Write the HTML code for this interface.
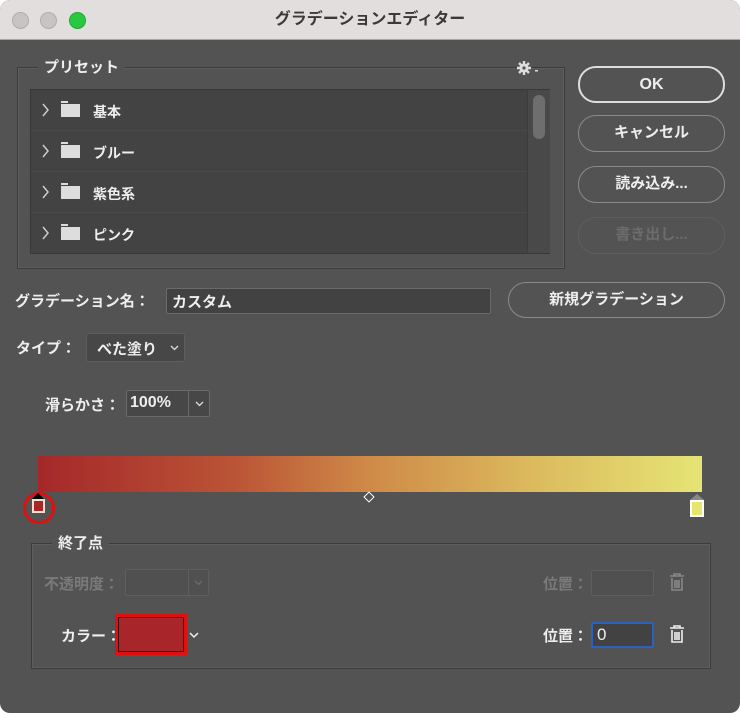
<!DOCTYPE html>
<html><head><meta charset="utf-8"><style>
*{box-sizing:border-box;margin:0;padding:0}
body{width:740px;height:713px;background:#fff;font-family:"Liberation Sans","Noto Sans CJK JP",sans-serif;font-size:15px;color:#eee;position:relative;overflow:hidden}
.win{position:absolute;left:0;top:0;width:740px;height:713px;background:#535353;border-radius:10px;overflow:hidden}
.tb{position:absolute;left:0;top:0;width:740px;height:40px;background:#e2dede;border-bottom:1px solid #a8a4a4;text-align:center;line-height:40px;color:#3a3a3a;font-weight:bold;font-size:16px}
.dot{position:absolute;top:12px;width:17px;height:17px;border-radius:50%;background:#c8c4c4;border:1px solid #b0acac}
.a{position:absolute}
.btn{position:absolute;border:1.5px solid #8a8a8a;border-radius:18px;text-align:center;font-weight:bold;font-size:15px;color:#eee}
.inp{position:absolute;background:#474747;border:1px solid #6a6a6a;border-radius:2px}
.lbl{position:absolute;font-weight:bold;font-size:15px;white-space:nowrap}
.row{position:absolute;left:0;width:497px;height:41px;border-bottom:1px solid #4a4a4a;font-weight:bold;font-size:14px}
.fold{position:absolute;left:30px;top:14px;width:19px;height:13px;background:#ddd}
.fold:before{content:"";position:absolute;left:0;top:-3px;width:7px;height:2px;background:#ddd}
.chev{position:absolute;left:11px;top:13px}
</style></head><body>
<div class="win">
<div class="tb">グラデーションエディター</div>
<div class="dot" style="left:12px"></div><div class="dot" style="left:40px"></div><div class="dot" style="left:69px;background:#2ac840;border-color:#22a834"></div>

<div class="a" style="left:17px;top:67px;width:548px;height:202px;border:1px solid #3c3c3c;box-shadow:inset 0 0 0 1px #5e5e5e"></div>
<div class="lbl" style="left:38px;top:56px;background:#535353;padding:0 6px">プリセット</div>
<svg class="a" style="left:516px;top:60px" width="26" height="16" viewBox="0 0 26 16"><circle cx="8" cy="8" r="4.5" fill="#ddd"/><g stroke="#ddd" stroke-width="2.4"><path d="M8 1v14M1 8h14M3 3l10 10M13 3L3 13"/></g><circle cx="8" cy="8" r="1.6" fill="#535353"/><rect x="19" y="10" width="3" height="1.5" fill="#ddd"/></svg>
<div class="a" style="left:30px;top:89px;width:520px;height:165px;background:#434343;border:1px solid #383838">
 <div class="row" style="top:0"><svg class="chev" width="8" height="14"><path d="M1 1l5 6-5 6" stroke="#ccc" stroke-width="1.5" fill="none"/></svg><div class="fold"></div><span class="a" style="left:62px;top:12px">基本</span></div>
 <div class="row" style="top:41px"><svg class="chev" width="8" height="14"><path d="M1 1l5 6-5 6" stroke="#ccc" stroke-width="1.5" fill="none"/></svg><div class="fold"></div><span class="a" style="left:62px;top:12px">ブルー</span></div>
 <div class="row" style="top:82px"><svg class="chev" width="8" height="14"><path d="M1 1l5 6-5 6" stroke="#ccc" stroke-width="1.5" fill="none"/></svg><div class="fold"></div><span class="a" style="left:62px;top:12px">紫色系</span></div>
 <div class="row" style="top:123px;border:none"><svg class="chev" width="8" height="14"><path d="M1 1l5 6-5 6" stroke="#ccc" stroke-width="1.5" fill="none"/></svg><div class="fold"></div><span class="a" style="left:62px;top:12px">ピンク</span></div>
 <div class="a" style="left:496px;top:0;width:23px;height:163px;background:#494949;border-left:1px solid #3c3c3c"><div class="a" style="left:5px;top:5px;width:12px;height:44px;border-radius:6px;background:#6e6e6e"></div></div>
</div>

<div class="btn" style="left:578px;top:66px;width:147px;height:37px;line-height:33px;border-color:#ddd;border-width:2px;font-size:16px">OK</div>
<div class="btn" style="left:578px;top:115px;width:147px;height:37px;line-height:34px">キャンセル</div>
<div class="btn" style="left:578px;top:166px;width:147px;height:37px;line-height:34px">読み込み...</div>
<div class="btn" style="left:578px;top:217px;width:147px;height:37px;line-height:34px;border-color:#5e5e5e;color:#6c6c6c">書き出し...</div>
<div class="btn" style="left:508px;top:282px;width:217px;height:36px;line-height:33px">新規グラデーション</div>

<div class="lbl" style="left:15px;top:290px">グラデーション名：</div>
<div class="inp" style="left:166px;top:288px;width:325px;height:26px;background:#424242"><span class="a" style="left:5px;top:2px;font-weight:bold">カスタム</span></div>
<div class="lbl" style="left:16px;top:337px">タイプ：</div>
<div class="inp" style="left:86px;top:333px;width:99px;height:29px;background:#474747;border-color:#5e5e5e;border-radius:3px"><span class="a" style="left:10px;top:4px;font-weight:bold">べた塗り</span><svg class="a" style="left:83px;top:11px" width="9" height="6"><path d="M1 1l3.5 3.5L8 1" stroke="#ddd" stroke-width="1.3" fill="none"/></svg></div>
<div class="lbl" style="left:45px;top:394px">滑らかさ：</div>
<div class="inp" style="left:126px;top:390px;width:84px;height:27px"><span class="a" style="left:3px;top:3px;font-weight:bold;font-size:16px">100%</span><div class="a" style="left:61px;top:0;width:1px;height:25px;background:#6a6a6a"></div><svg class="a" style="left:68px;top:10px" width="9" height="6"><path d="M1 1l3.5 3.5L8 1" stroke="#ddd" stroke-width="1.3" fill="none"/></svg></div>

<div class="a" style="left:38px;top:456px;width:664px;height:36px;background:linear-gradient(90deg,#a5282a 0%,#bb5536 30%,#cf8a48 50%,#dcbb5e 75%,#e6e474 100%)"></div>
<div class="a" style="left:23px;top:492px;width:32px;height:32px;border:3px solid #e01010;border-radius:50%"></div>
<div class="a" style="left:32px;top:493px;width:0;height:0;border-left:6px solid transparent;border-right:6px solid transparent;border-bottom:6px solid #000"></div>
<div class="a" style="left:32px;top:499px;width:13px;height:14px;background:#a8262a;border:2px solid #f2e0d0"></div>
<div class="a" style="left:365px;top:493px;width:8px;height:8px;border:1.5px solid #fff;transform:rotate(45deg)"></div>
<div class="a" style="left:690px;top:494px;width:0;height:0;border-left:7px solid transparent;border-right:7px solid transparent;border-bottom:6px solid #888"></div>
<div class="a" style="left:690px;top:500px;width:14px;height:17px;background:#e8e46c;border:2px solid #fff"></div>

<div class="a" style="left:31px;top:543px;width:680px;height:126px;border:1px solid #3c3c3c;box-shadow:inset 0 0 0 1px #5e5e5e"></div>
<div class="lbl" style="left:52px;top:532px;background:#535353;padding:0 6px">終了点</div>
<div class="lbl" style="left:44px;top:573px;color:#7a7a7a">不透明度：</div>
<div class="inp" style="left:125px;top:569px;width:84px;height:27px;background:#505050;border-color:#5e5e5e"><div class="a" style="left:62px;top:0;width:1px;height:25px;background:#5e5e5e"></div><svg class="a" style="left:68px;top:10px" width="9" height="6"><path d="M1 1l3.5 3.5L8 1" stroke="#6a6a6a" stroke-width="1.3" fill="none"/></svg></div>
<div class="lbl" style="left:61px;top:625px">カラー：</div>
<div class="a" style="left:115px;top:614px;width:72px;height:41px;border:3px solid #e01010;background:#a8262a;box-shadow:inset 0 0 0 1px #3a1010"></div>
<svg class="a" style="left:189px;top:632px" width="10" height="7"><path d="M1 1l4 4 4-4" stroke="#eee" stroke-width="1.5" fill="none"/></svg>
<div class="lbl" style="left:543px;top:573px;color:#7a7a7a">位置：</div>
<div class="inp" style="left:591px;top:570px;width:63px;height:26px;background:#505050;border-color:#5e5e5e"></div>
<div class="lbl" style="left:543px;top:625px">位置：</div>
<div class="inp" style="left:591px;top:622px;width:63px;height:26px;background:#424242;border:2px solid #2a62c0"><span class="a" style="left:4px;top:1px;font-size:17px">0</span></div>
<svg class="a" style="left:668px;top:572px" width="18" height="20" viewBox="0 0 18 20" fill="none" stroke="#888" stroke-width="1.6"><path d="M2 4h14M6 4V2h6v2M4 6v12h10V6M7 8v8M9 8v8M11 8v8"/></svg>
<svg class="a" style="left:668px;top:624px" width="18" height="20" viewBox="0 0 18 20" fill="none" stroke="#eee" stroke-width="1.6"><path d="M2 4h14M6 4V2h6v2M4 6v12h10V6M7 8v8M9 8v8M11 8v8"/></svg>
</div>
</body></html>
